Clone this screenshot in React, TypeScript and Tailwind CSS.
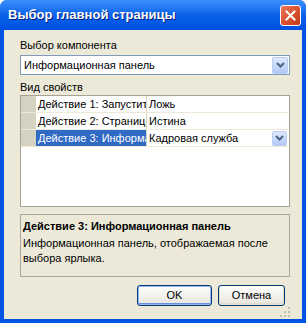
import { ReactNode } from 'react';

const font = { fontFamily: '"Liberation Sans", Arial, sans-serif' };

function Chevron() {
  return (
    <svg width="9" height="6" viewBox="0 0 9 6">
      <path d="M1 1 L4.5 4.5 L8 1" fill="none" stroke="#4d6185" strokeWidth="2" />
    </svg>
  );
}

function DropButton({ small }: { small?: boolean }) {
  return (
    <div
      className={`flex items-center justify-center rounded-[2px] border border-[#b9cdf6] bg-gradient-to-b from-[#e0eafd] to-[#b4c8f6] ${
        small ? 'h-[15px] w-[15px]' : 'h-[17px] w-[16px]'
      }`}
    >
      <Chevron />
    </div>
  );
}

function Row({ name, value, selected, drop }: { name: string; value: string; selected?: boolean; drop?: boolean }) {
  return (
    <div className="flex h-[17px] border-b border-[#ece9d8]">
      <div className="w-[15px] shrink-0 bg-[#d6d2c2]" />
      <div
        className={`w-[111px] shrink-0 overflow-hidden whitespace-nowrap border-r border-[#d6d2c2] pl-[2px] leading-[16px] ${
          selected ? 'bg-[#316ac5] text-white' : 'text-black'
        }`}
      >
        {name}
      </div>
      <div className="flex flex-1 items-center justify-between pl-[2px] pr-[2px] leading-[16px] text-black">
        <span>{value}</span>
        {drop && <DropButton small />}
      </div>
    </div>
  );
}

function XpButton({ children, isDefault }: { children: ReactNode; isDefault?: boolean }) {
  return (
    <div
      className={`flex h-[21px] items-center justify-center rounded-[3px] border border-[#003c74] bg-gradient-to-b from-white to-[#e6e4dc] text-[11px] text-black ${
        isDefault ? 'shadow-[inset_0_0_0_1px_#9ab8f2,inset_0_-1px_0_1px_#6990e0]' : 'shadow-[inset_0_-1px_0_1px_#e0ddd0]'
      }`}
    >
      {children}
    </div>
  );
}

export default function App() {
  return (
    <div className="h-[323px] w-[306px] overflow-hidden" style={font}>
      <div className="flex h-full flex-col rounded-t-[7px] bg-[#0054e3]">
        {/* title bar */}
        <div className="flex h-[30px] shrink-0 items-center justify-between rounded-t-[7px] bg-gradient-to-b from-[#3c8ffb] via-[#0962ea] to-[#0050e0] pl-[8px] pr-[5px]">
          <span className="text-[13px] font-bold text-white [text-shadow:1px_1px_0_#0a1e80]">
            Выбор главной страницы
          </span>
          <div className="flex h-[21px] w-[21px] items-center justify-center rounded-[3px] border border-white bg-gradient-to-br from-[#e8795c] via-[#d9532f] to-[#c23b18]">
            <svg width="11" height="11" viewBox="0 0 11 11">
              <path d="M1.5 1.5 L9.5 9.5 M9.5 1.5 L1.5 9.5" stroke="white" strokeWidth="2" strokeLinecap="square" />
            </svg>
          </div>
        </div>

        {/* body */}
        <div className="mx-[4px] mb-[4px] flex flex-1 flex-col bg-[#ece9d8] pl-[16px] pr-[12px] text-[11px]">
          <div className="mt-[9px] leading-[13px] text-black">Выбор компонента</div>
          <div className="mt-[3px] flex h-[20px] items-center justify-between border border-[#7f9db9] bg-white pl-[3px] pr-[1px]">
            <span className="text-black">Информационная панель</span>
            <DropButton />
          </div>

          <div className="mt-[6px] leading-[13px] text-black">Вид свойств</div>
          <div className="mt-[1px] h-[112px] border border-[#a5a293] bg-white">
            <Row name="Действие 1: Запустить приложение" value="Ложь" />
            <Row name="Действие 2: Страница" value="Истина" />
            <Row name="Действие 3: Информационная панель" value="Кадровая служба" selected drop />
          </div>

          <div className="mt-[7px] h-[63px] border border-[#aca899] px-[2px] pt-[4px] text-black">
            <div className="font-bold leading-[14px]">Действие 3: Информационная панель</div>
            <div className="mt-[3px] leading-[15px]">
              Информационная панель, отображаемая после выбора ярлыка.
            </div>
          </div>

          <div className="mt-[8px] flex justify-end gap-[6px] pr-[5px]">
            <div className="w-[75px]">
              <XpButton isDefault>OK</XpButton>
            </div>
            <div className="w-[67px]">
              <XpButton>Отмена</XpButton>
            </div>
          </div>
          <div className="mt-auto flex justify-end pb-[2px]">
            <svg width="10" height="10" viewBox="0 0 10 10">
              <g fill="#c3bfae">
                <rect x="8" y="0" width="2" height="2" />
                <rect x="4" y="4" width="2" height="2" />
                <rect x="8" y="4" width="2" height="2" />
                <rect x="0" y="8" width="2" height="2" />
                <rect x="4" y="8" width="2" height="2" />
                <rect x="8" y="8" width="2" height="2" />
              </g>
            </svg>
          </div>
        </div>
      </div>
    </div>
  );
}
